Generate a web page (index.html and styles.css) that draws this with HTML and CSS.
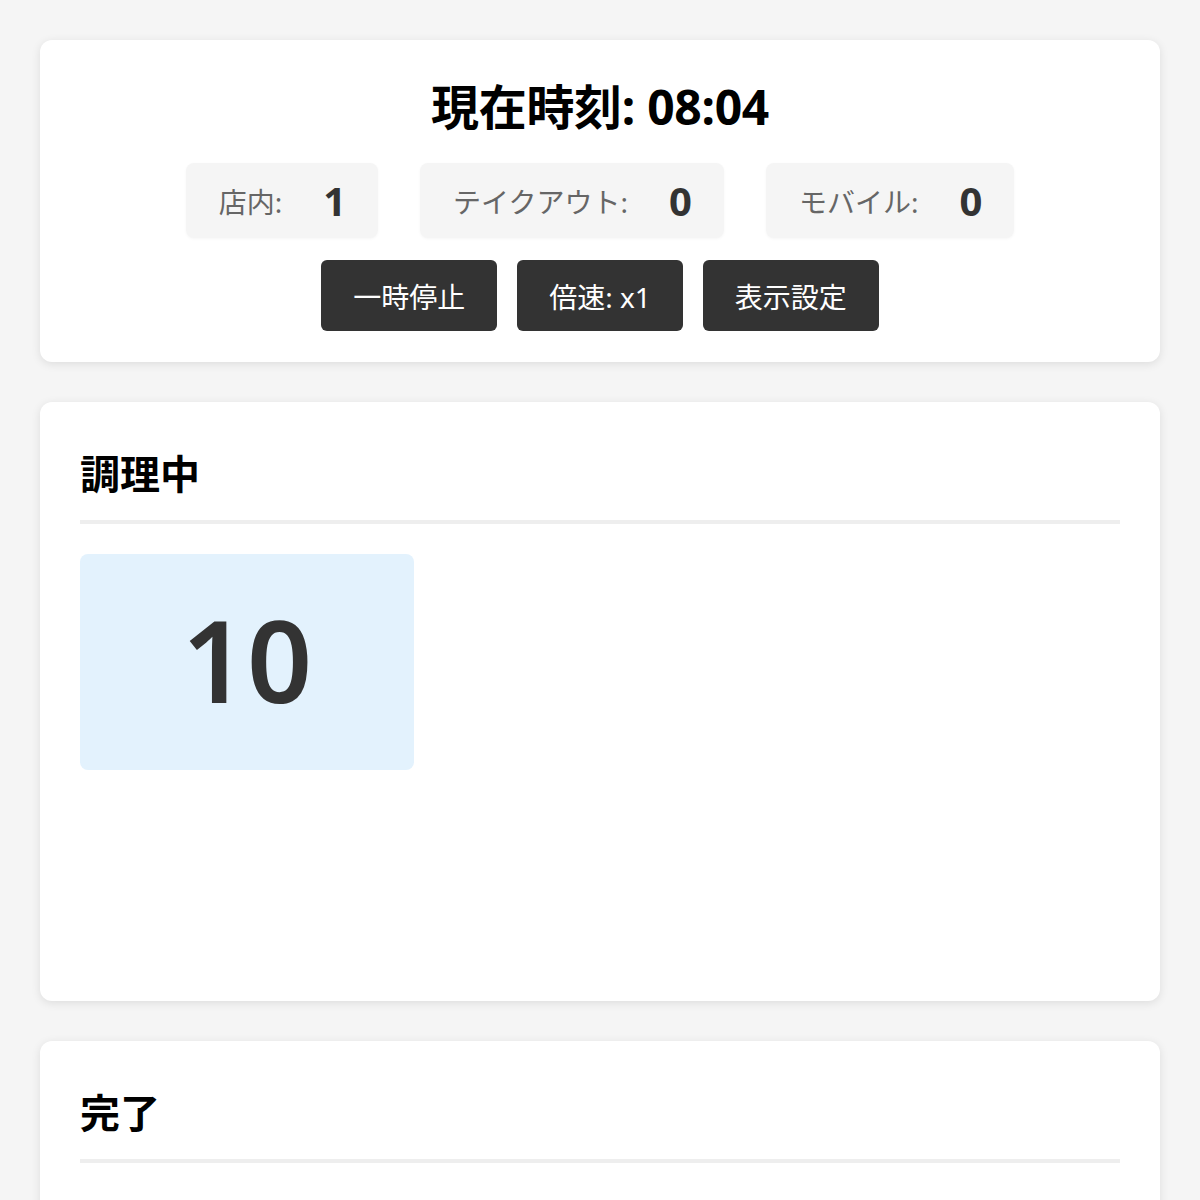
FILE: index.html
```html
<!DOCTYPE html>
<html lang="ja">
<head>
<meta charset="utf-8">
<link rel="stylesheet" href="styles.css">
</head>
<body>
<div class="page">
  <section class="card header">
    <h1 class="clock">現在時刻: 08:04</h1>
    <div class="stats">
      <div class="stat"><span class="label">店内:</span><span class="value">1</span></div>
      <div class="stat"><span class="label">テイクアウト:</span><span class="value">0</span></div>
      <div class="stat"><span class="label">モバイル:</span><span class="value">0</span></div>
    </div>
    <div class="controls">
      <button class="btn">一時停止</button>
      <button class="btn">倍速: x1</button>
      <button class="btn">表示設定</button>
    </div>
  </section>
  <section class="card section cooking">
    <h2 class="section-title">調理中</h2>
    <div class="orders">
      <div class="order">10</div>
    </div>
  </section>
  <section class="card section done">
    <h2 class="section-title">完了</h2>
    <div class="orders"></div>
  </section>
</div>
</body>
</html>
```
FILE: styles.css
```css
* { box-sizing: border-box; }
html, body { margin: 0; padding: 0; }
body {
  background: #f5f5f5;
  font-family: "Noto Sans", "Noto Sans CJK JP", sans-serif;
  color: #000;
}
.page {
  padding: 40px;
  display: flex;
  flex-direction: column;
  gap: 40px;
}
.card {
  background: #fff;
  border-radius: 12px;
  box-shadow: 0 2px 10px rgba(0,0,0,0.1);
}
.header {
  padding: 30px 40px 31px;
  display: flex;
  flex-direction: column;
  align-items: center;
}
.clock {
  margin: 0;
  font-size: 48px;
  font-weight: 700;
  line-height: 74px;
  letter-spacing: -0.3px;
}
.stats {
  display: flex;
  gap: 42px;
  margin-top: 19px;
}
.stat {
  background: #f5f5f5;
  border-radius: 8px;
  height: 75px;
  padding: 0 32px 0 33px;
  display: flex;
  align-items: center;
  gap: 41px;
  box-shadow: 0 1px 3px rgba(0,0,0,0.04);
}
.label {
  font-size: 28px;
  color: #666;
}
.value {
  font-size: 40px;
  font-weight: 700;
  color: #333;
}
.controls {
  display: flex;
  gap: 20px;
  margin-top: 22px;
}
.btn {
  font-family: inherit;
  background: #333;
  color: #fff;
  border: none;
  border-radius: 6px;
  height: 71px;
  padding: 0 32px;
  font-size: 28px;
}
.section {
  padding: 40px;
}
.cooking { min-height: 599px; }
.done { min-height: 300px; }
.section-title {
  margin: 0;
  font-size: 40px;
  font-weight: 700;
  line-height: 64px;
  padding-bottom: 14px;
  border-bottom: 4px solid #eeeeee;
}
.orders {
  margin-top: 30px;
  display: flex;
  gap: 20px;
}
.order {
  width: 334px;
  height: 216px;
  background: #e3f2fd;
  border-radius: 8px;
  display: flex;
  align-items: center;
  justify-content: center;
  padding-bottom: 8px;
  font-size: 114px;
  font-weight: 600;
  color: #333;
}
```
